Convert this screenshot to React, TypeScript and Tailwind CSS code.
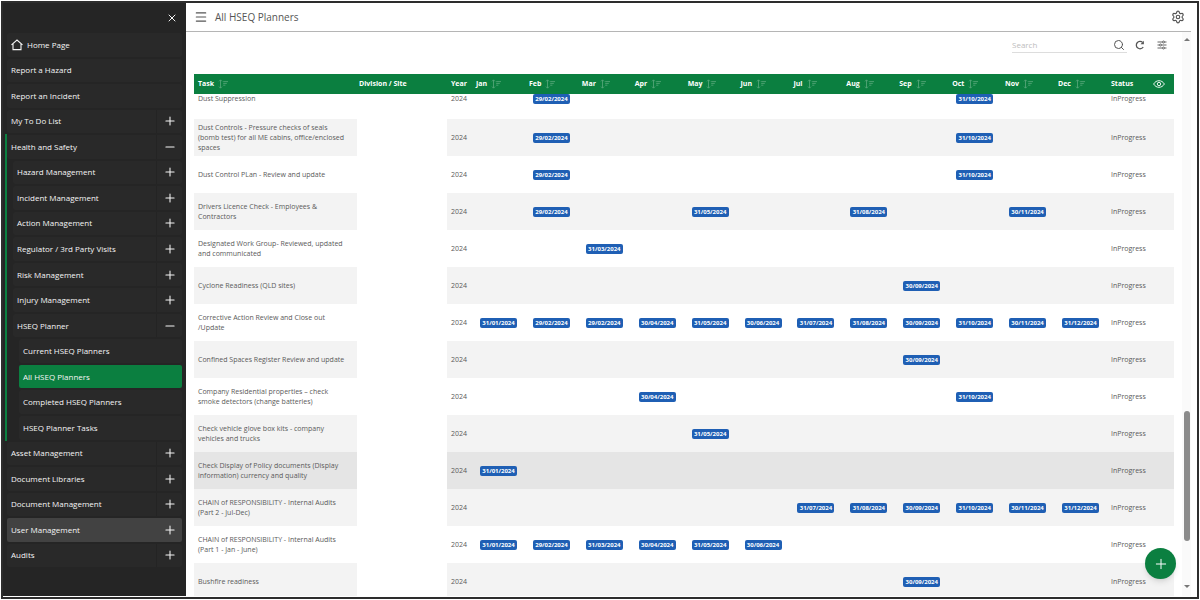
import React from 'react';
import { Menu, Minus, Plus, Search, Settings, X } from 'lucide-react';
import clsx from 'clsx';

interface NavItem {
  label: string;
  level: 1 | 2 | 3;
  icon?: 'home';
  toggle?: 'open' | 'closed';
  grouped?: boolean;
  state?: 'active' | 'hover';
}

interface PlannerRow {
  task: string;
  dates: Record<number, string>;
}

const navItems: NavItem[] = [
  { label: 'Home Page', level: 1, icon: 'home' },
  { label: 'Report a Hazard', level: 1 },
  { label: 'Report an Incident', level: 1 },
  { label: 'My To Do List', level: 1, toggle: 'closed' },
  { label: 'Health and Safety', level: 1, toggle: 'open', grouped: true },
  { label: 'Hazard Management', level: 2, toggle: 'closed', grouped: true },
  { label: 'Incident Management', level: 2, toggle: 'closed', grouped: true },
  { label: 'Action Management', level: 2, toggle: 'closed', grouped: true },
  { label: 'Regulator / 3rd Party Visits', level: 2, toggle: 'closed', grouped: true },
  { label: 'Risk Management', level: 2, toggle: 'closed', grouped: true },
  { label: 'Injury Management', level: 2, toggle: 'closed', grouped: true },
  { label: 'HSEQ Planner', level: 2, toggle: 'open', grouped: true },
  { label: 'Current HSEQ Planners', level: 3, grouped: true },
  { label: 'All HSEQ Planners', level: 3, grouped: true, state: 'active' },
  { label: 'Completed HSEQ Planners', level: 3, grouped: true },
  { label: 'HSEQ Planner Tasks', level: 3, grouped: true },
  { label: 'Asset Management', level: 1, toggle: 'closed' },
  { label: 'Document Libraries', level: 1, toggle: 'closed' },
  { label: 'Document Management', level: 1, toggle: 'closed' },
  { label: 'User Management', level: 1, toggle: 'closed', state: 'hover' },
  { label: 'Audits', level: 1, toggle: 'closed' },
];

const months = ['Jan', 'Feb', 'Mar', 'Apr', 'May', 'Jun', 'Jul', 'Aug', 'Sep', 'Oct', 'Nov', 'Dec'];

// dates are keyed by month index
const rows: PlannerRow[] = [
  { task: 'Dust Suppression', dates: { 1: '29/02/2024', 9: '31/10/2024' } },
  {
    task: 'Dust Controls - Pressure checks of seals (bomb test) for all ME cabins, office/enclosed spaces',
    dates: { 1: '29/02/2024', 9: '31/10/2024' },
  },
  { task: 'Dust Control PLan - Review and update', dates: { 1: '29/02/2024', 9: '31/10/2024' } },
  {
    task: 'Drivers Licence Check - Employees & Contractors',
    dates: { 1: '29/02/2024', 4: '31/05/2024', 7: '31/08/2024', 10: '30/11/2024' },
  },
  { task: 'Designated Work Group- Reviewed, updated and communicated', dates: { 2: '31/03/2024' } },
  { task: 'Cyclone Readiness (QLD sites)', dates: { 8: '30/09/2024' } },
  {
    task: 'Corrective Action Review and Close out /Update',
    dates: {
      0: '31/01/2024',
      1: '29/02/2024',
      2: '29/02/2024',
      3: '30/04/2024',
      4: '31/05/2024',
      5: '30/06/2024',
      6: '31/07/2024',
      7: '31/08/2024',
      8: '30/09/2024',
      9: '31/10/2024',
      10: '30/11/2024',
      11: '31/12/2024',
    },
  },
  { task: 'Confined Spaces Register Review and update', dates: { 8: '30/09/2024' } },
  {
    task: 'Company Residential properties – check smoke detectors (change batteries)',
    dates: { 3: '30/04/2024', 9: '31/10/2024' },
  },
  { task: 'Check vehicle glove box kits - company vehicles and trucks', dates: { 4: '31/05/2024' } },
  {
    task: 'Check Display of Policy documents (Display information) currency and quality',
    dates: { 0: '31/01/2024' },
  },
  {
    task: 'CHAIN of RESPONSIBILITY - Internal Audits (Part 2 - Jul-Dec)',
    dates: {
      6: '31/07/2024',
      7: '31/08/2024',
      8: '30/09/2024',
      9: '31/10/2024',
      10: '30/11/2024',
      11: '31/12/2024',
    },
  },
  {
    task: 'CHAIN of RESPONSIBILITY - Internal Audits (Part 1 - Jan - June)',
    dates: {
      0: '31/01/2024',
      1: '29/02/2024',
      2: '31/03/2024',
      3: '30/04/2024',
      4: '31/05/2024',
      5: '30/06/2024',
    },
  },
  { task: 'Bushfire readiness', dates: { 8: '30/09/2024' } },
];

const highlightedRow = 10;

const HomeIcon = () => (
  <svg viewBox="0 0 12 12" className="h-3 w-3 shrink-0" fill="none" stroke="currentColor" strokeWidth="1.1">
    <path d="M.5 5.8 6 1l5.5 4.8M2 4.8v5.8h8V4.8" />
  </svg>
);

const SortIcon = () => (
  <svg viewBox="0 0 10 10" className="h-2.5 w-2.5" fill="none" stroke="currentColor" strokeWidth="0.8">
    <path d="M2.5 1v8M1 2.4 2.5.8 4 2.4M1 7.6l1.5 1.6L4 7.6M5.2 2.6H10M5.2 4.4h3.6M5.2 6.2h2.2" />
  </svg>
);

const EyeIcon = () => (
  <svg viewBox="0 0 12 8" className="h-2 w-3" fill="none" stroke="currentColor" strokeWidth="0.9">
    <path d="M.6 4C2 1.8 3.8.7 6 .7S10 1.8 11.4 4C10 6.2 8.2 7.3 6 7.3S2 6.2.6 4Z" />
    <circle cx="6" cy="4" r="1.7" />
  </svg>
);

const RefreshIcon = () => (
  <svg viewBox="0 0 10 10" className="h-2.5 w-2.5" fill="none" stroke="currentColor" strokeWidth="1.3">
    <path d="M8.2 7A3.7 3.7 0 1 1 7.6 2.4" />
    <path d="M8.9.8v3.4H5.5Z" fill="currentColor" stroke="none" />
  </svg>
);

const FiltersIcon = () => (
  <svg viewBox="0 0 10 10" className="h-2.5 w-2.5" fill="none" stroke="currentColor" strokeWidth="0.9">
    <path d="M.5 2h5M7.5 2h2M.5 5h2M4.5 5h5M.5 8h5M7.5 8h2" />
    <circle cx="6.5" cy="2" r="1" />
    <circle cx="3.5" cy="5" r="1" />
    <circle cx="6.5" cy="8" r="1" />
  </svg>
);

const NavRow: React.FC<{ item: NavItem }> = ({ item }) => {
  return (
    <li
      className={clsx(
        'flex min-h-0 flex-1 border-l-2 py-px',
        item.grouped ? 'border-[#0b7f40]' : 'border-transparent',
        item.level === 2 && 'pl-1.5',
        item.level === 3 && 'pl-3'
      )}
    >
      <div
        className={clsx(
          'flex flex-1 gap-px rounded-xs',
          item.state === 'active' && 'bg-[#0b7f40]',
          item.state === 'hover' && 'bg-[#424242]',
          !item.state && 'bg-[#292929]'
        )}
      >
        <a href="#" className="flex flex-1 items-center gap-1 pl-1">
          {item.icon === 'home' && <HomeIcon />}
          {item.label}
        </a>
        {item.toggle && (
          <button
            aria-label={`Toggle ${item.label}`}
            className={clsx(
              'flex w-[26px] items-center justify-center border-l',
              item.state === 'hover' ? 'border-[#424242]' : 'border-[#242424]'
            )}
          >
            {item.toggle === 'open' ? (
              <Minus className="h-3.5 w-3.5" strokeWidth={1.8} />
            ) : (
              <Plus className="h-3.5 w-3.5" strokeWidth={1.8} />
            )}
          </button>
        )}
      </div>
    </li>
  );
};

const Sidebar = () => {
  return (
    <aside className="flex w-[183px] shrink-0 flex-col bg-[#252525] pr-1 pb-7 pl-0.5 text-[8px] font-medium text-[#f5f5f5]">
      <div className="flex h-[29px] shrink-0 items-center justify-end pr-1">
        <button aria-label="Close menu">
          <X className="h-3 w-3" strokeWidth={2} />
        </button>
      </div>
      <nav className="flex min-h-0 flex-1">
        <ul className="flex flex-1 flex-col">
          {navItems.map((item) => (
            <NavRow key={item.label} item={item} />
          ))}
        </ul>
      </nav>
    </aside>
  );
};

const PlannerTable = () => {
  return (
    <table className="w-full table-fixed border-collapse text-left text-[7px] leading-[10px] text-[#5a5a5a]">
      <thead className="bg-[#0b7f40] font-extrabold text-white">
        <tr className="h-5">
          <th className="w-[163px] px-1">
            <span className="flex items-center gap-1">
              Task
              <button aria-label="Sort by task" className="text-[#5aa87c]">
                <SortIcon />
              </button>
            </span>
          </th>
          <th className="w-[90px] px-0.5">Division / Site</th>
          <th className="w-[25px] pl-1">Year</th>
          {months.map((month) => (
            <th key={month} className="pl-1">
              <span className="flex items-center gap-1">
                {month}
                <button aria-label={`Sort by ${month}`} className="text-[#5aa87c]">
                  <SortIcon />
                </button>
              </span>
            </th>
          ))}
          <th className="w-[46px] pl-1">Status</th>
          <th className="w-[21px]">
            <button aria-label="Show columns" className="flex items-center">
              <EyeIcon />
            </button>
          </th>
        </tr>
      </thead>
      <tbody>
        {rows.map((row, i) => (
          <tr
            key={row.task}
            className={clsx(
              i === 0 ? 'h-[25px] align-top' : 'h-[37px] align-middle',
              i === highlightedRow ? 'bg-[#e5e5e5]' : i % 2 === 1 && 'bg-[#f3f3f3]'
            )}
          >
            <td className="pr-2 pl-1">{row.task}</td>
            <td className="bg-white" />
            <td className="pl-1">2024</td>
            {months.map((month, m) => (
              <td key={month} className="pl-2">
                {row.dates[m] && (
                  <span className="flex h-2.5 w-[37px] items-center justify-center rounded-xs bg-[#1f5fb4] text-[6px] font-bold text-white">
                    {row.dates[m]}
                  </span>
                )}
              </td>
            ))}
            <td className="pl-1">InProgress</td>
            <td />
          </tr>
        ))}
      </tbody>
    </table>
  );
};

const Scrollbar = () => {
  return (
    <div className="flex w-[9px] shrink-0 flex-col items-center bg-[#fafafa] pt-1.5 pb-2">
      <div className="h-0 w-0 border-x-3 border-b-3 border-x-transparent border-b-[#777777]" />
      <div className="grow-[370]" />
      <div className="w-1.5 grow-[130] rounded-full bg-[#8b8b8b]" />
      <div className="grow-[44]" />
      <div className="h-0 w-0 border-x-3 border-t-3 border-x-transparent border-t-[#777777]" />
    </div>
  );
};

export default function App() {
  return (
    <div className="h-screen bg-white p-px font-['Open_Sans',sans-serif]">
      <div className="relative flex h-full overflow-hidden border-2 border-[#2d2d2d] bg-white pr-1.5 pb-px">
        <Sidebar />
        <main className="flex min-w-0 flex-1 flex-col">
          <header className="flex h-[29px] shrink-0 items-center gap-[7px] border-b border-[#b5b5b5] pr-1.5 pl-2 text-[#555555]">
            <button aria-label="Toggle menu">
              <Menu className="h-3.5 w-3.5" strokeWidth={2} />
            </button>
            <h1 className="flex-1 text-[10px]">All HSEQ Planners</h1>
            <button aria-label="Settings">
              <Settings className="h-3.5 w-3.5" strokeWidth={2} />
            </button>
          </header>
          <div className="flex min-h-0 flex-1">
            <div className="flex min-w-0 flex-1 flex-col overflow-hidden pr-2 pl-2">
              <div className="flex h-[42px] shrink-0 items-start justify-end gap-2 pt-1.5 pr-[7px] text-[#555555]">
                <div className="flex h-[15px] w-[115px] items-center border-b border-[#dddddd] pr-0.5">
                  <input
                    type="search"
                    aria-label="Search"
                    placeholder="Search"
                    className="min-w-0 flex-1 text-[8px] outline-none placeholder:text-[#bdbdbd]"
                  />
                  <button aria-label="Run search">
                    <Search className="h-3 w-3" strokeWidth={2} />
                  </button>
                </div>
                <div className="flex h-3.5 items-center gap-3">
                  <button aria-label="Refresh">
                    <RefreshIcon />
                  </button>
                  <button aria-label="Filters">
                    <FiltersIcon />
                  </button>
                </div>
              </div>
              <PlannerTable />
            </div>
            <Scrollbar />
          </div>
        </main>
        <button
          aria-label="Add planner"
          className="absolute right-[21px] bottom-[18px] flex h-[31px] w-[31px] items-center justify-center rounded-full bg-[#0b7f40] text-white shadow-md"
        >
          <Plus className="h-4 w-4" strokeWidth={1.5} />
        </button>
      </div>
    </div>
  );
}
